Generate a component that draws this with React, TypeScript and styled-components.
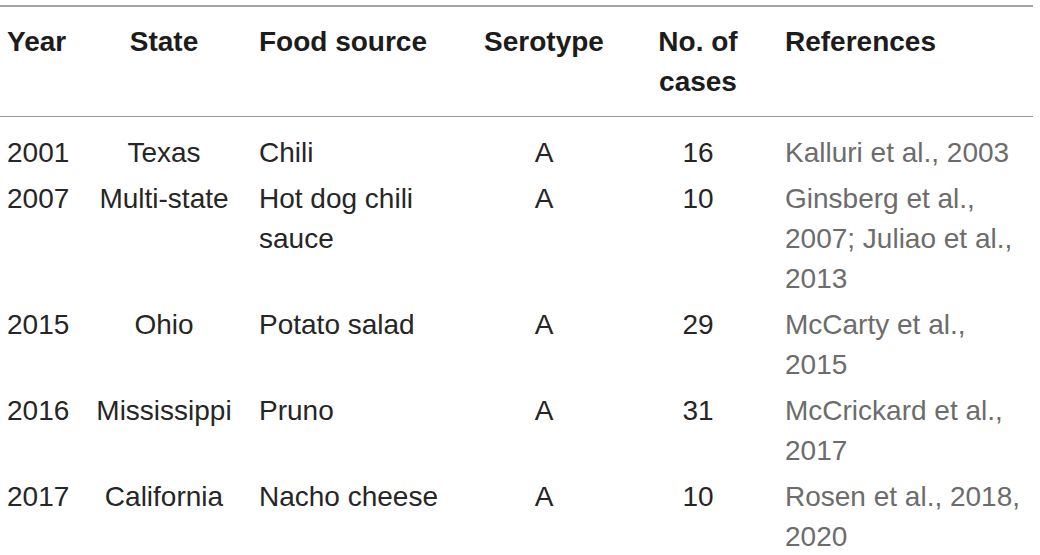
import React from "react"
import styled, { createGlobalStyle } from "styled-components"

const GlobalStyle = createGlobalStyle`
  html, body {
    margin: 0;
    padding: 0;
    background: #ffffff;
  }
  body {
    font-family: "Liberation Sans", Arial, Helvetica, sans-serif;
  }
`

const Page = styled.div`
  width: 1040px;
  padding-top: 5px;
`

const Table = styled.table`
  width: 1033px;
  table-layout: fixed;
  border-collapse: separate;
  border-spacing: 0;
  border-top: 2px solid #a4a4a4;
  font-size: 28px;
  line-height: 40px;
`

type Align = "left" | "center"

const HeadCell = styled.th<{ $align?: Align }>`
  text-align: ${({ $align }) => $align || "left"};
  vertical-align: top;
  font-weight: 700;
  color: #1c1c1c;
  padding: 15px 7px 14px;
  border-bottom: 1px solid #9a9a9a;
`

const Row = styled.tr`
  &:first-child td {
    padding-top: 16px;
  }
`

const Cell = styled.td<{ $align?: Align; $muted?: boolean }>`
  text-align: ${({ $align }) => $align || "left"};
  vertical-align: top;
  font-weight: 400;
  color: ${({ $muted }) => ($muted ? "#6c6c6c" : "#262626")};
  padding: 3px 7px;
`

interface Outbreak {
  year: string
  state: string
  food: string
  serotype: string
  cases: string
  refs: string
}

const rows: Outbreak[] = [
  { year: "2001", state: "Texas", food: "Chili", serotype: "A", cases: "16", refs: "Kalluri et al., 2003" },
  {
    year: "2007",
    state: "Multi-state",
    food: "Hot dog chili sauce",
    serotype: "A",
    cases: "10",
    refs: "Ginsberg et al., 2007; Juliao et al., 2013",
  },
  { year: "2015", state: "Ohio", food: "Potato salad", serotype: "A", cases: "29", refs: "McCarty et al., 2015" },
  { year: "2016", state: "Mississippi", food: "Pruno", serotype: "A", cases: "31", refs: "McCrickard et al., 2017" },
  { year: "2017", state: "California", food: "Nacho cheese", serotype: "A", cases: "10", refs: "Rosen et al., 2018, 2020" },
]

const App = () => {
  return (
    <Page>
      <GlobalStyle />
      <Table>
        <colgroup>
          <col style={{ width: 76 }} />
          <col style={{ width: 176 }} />
          <col style={{ width: 218 }} />
          <col style={{ width: 148 }} />
          <col style={{ width: 160 }} />
          <col />
        </colgroup>
        <thead>
          <tr>
            <HeadCell>Year</HeadCell>
            <HeadCell $align="center">State</HeadCell>
            <HeadCell>Food source</HeadCell>
            <HeadCell $align="center">Serotype</HeadCell>
            <HeadCell $align="center">No. of cases</HeadCell>
            <HeadCell>References</HeadCell>
          </tr>
        </thead>
        <tbody>
          {rows.map((r) => (
            <Row key={r.year + r.state}>
              <Cell>{r.year}</Cell>
              <Cell $align="center">{r.state}</Cell>
              <Cell>{r.food}</Cell>
              <Cell $align="center">{r.serotype}</Cell>
              <Cell $align="center">{r.cases}</Cell>
              <Cell $muted>{r.refs}</Cell>
            </Row>
          ))}
        </tbody>
      </Table>
    </Page>
  )
}

export default App
